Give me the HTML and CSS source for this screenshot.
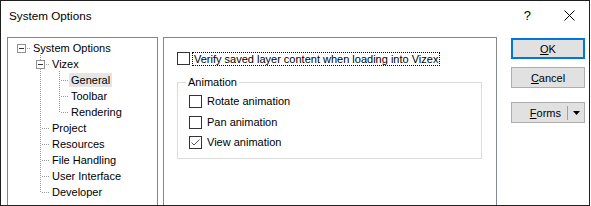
FILE: index.html
```html
<!DOCTYPE html>
<html>
<head>
<meta charset="utf-8">
<link rel="stylesheet" href="styles.css">
</head>
<body>
<div class="window">
  <div class="titlebar">
    <span class="title">System Options</span>
    <span class="help">?</span>
    <svg class="close" width="11" height="11" viewBox="0 0 11 11"><path d="M0.5 0.5L10.5 10.5M10.5 0.5L0.5 10.5" stroke="#000" stroke-width="1" fill="none"/></svg>
  </div>
  <div class="body">
    <div class="tree">
      <div class="row"><span class="cell"><span class="exp"></span><span class="hr-box"></span></span><span class="label">System Options</span></div>
      <div class="row"><span class="cell"></span><span class="cell pipe"><span class="exp"></span><span class="hr-box"></span></span><span class="label">Vizex</span></div>
      <div class="row"><span class="cell"></span><span class="cell pipe"></span><span class="cell tee"></span><span class="label selected">General</span></div>
      <div class="row"><span class="cell"></span><span class="cell pipe"></span><span class="cell tee"></span><span class="label">Toolbar</span></div>
      <div class="row"><span class="cell"></span><span class="cell pipe"></span><span class="cell elbow"></span><span class="label">Rendering</span></div>
      <div class="row"><span class="cell"></span><span class="cell tee"></span><span class="label">Project</span></div>
      <div class="row"><span class="cell"></span><span class="cell tee"></span><span class="label">Resources</span></div>
      <div class="row"><span class="cell"></span><span class="cell tee"></span><span class="label">File Handling</span></div>
      <div class="row"><span class="cell"></span><span class="cell tee"></span><span class="label">User Interface</span></div>
      <div class="row"><span class="cell"></span><span class="cell elbow"></span><span class="label">Developer</span></div>
    </div>
    <div class="panel">
      <div class="vrow"><span class="cb"></span><span class="focus">Verify saved layer content when loading into Vizex</span></div>
      <fieldset class="group">
        <legend>Animation</legend>
        <div class="crow first"><span class="cb"></span><span class="ctext">Rotate animation</span></div>
        <div class="crow"><span class="cb"></span><span class="ctext">Pan animation</span></div>
        <div class="crow"><span class="cb"><svg width="11" height="11" viewBox="0 0 11 11"><path d="M1.5 5.5L4 8L9.5 2.5" stroke="#555" stroke-width="1" fill="none"/></svg></span><span class="ctext">View animation</span></div>
      </fieldset>
    </div>
    <div class="buttons">
      <div class="btn default"><span><u>O</u>K</span></div>
      <div class="btn cancel"><span><u>C</u>ancel</span></div>
      <div class="btn split"><span class="stext"><u>F</u>orms</span><span class="sep"></span><svg class="arrow" width="7" height="4" viewBox="0 0 7 4"><path d="M0 0H7L3.5 4Z" fill="#000"/></svg></div>
    </div>
  </div>
</div>
</body>
</html>
```
FILE: styles.css
```css
html, body {
  margin: 0;
  padding: 0;
}
body {
  width: 591px;
  height: 206px;
  overflow: hidden;
  background: #ffffff;
  font-family: "Liberation Sans", Arial, sans-serif;
  font-size: 11px;
  color: #000;
}
.window {
  box-sizing: border-box;
  width: 590px;
  height: 206px;
  border: 1px solid #1f1f1f;
  background: #fff;
  display: flex;
  flex-direction: column;
}
.titlebar {
  flex: none;
  height: 29px;
  background: #fff;
  display: flex;
  align-items: center;
  padding: 0 14px 0 8px;
}
.title {
  flex: 1;
  font-size: 11.7px;
}
.help {
  font-size: 13px;
  margin-right: 33px;
}
.close {
  display: block;
}
.body {
  flex: 1;
  min-height: 0;
  display: flex;
  padding: 7px 0 0 6px;
}
.tree {
  flex: none;
  box-sizing: border-box;
  width: 151px;
  border: 1px solid #828790;
  border-bottom: none;
  background: #fff;
  padding: 1px 0 0 4px;
}
.row {
  display: flex;
  height: 16px;
}
.cell {
  flex: none;
  position: relative;
  width: 19px;
  height: 16px;
}
.cell.pipe::before,
.cell.tee::before,
.cell.elbow::before {
  content: "";
  position: absolute;
  left: 9px;
  top: 0;
  width: 1px;
  height: 16px;
  background: repeating-linear-gradient(to bottom, #9a9a9a 0 1px, transparent 1px 2px);
}
.cell.elbow::before {
  height: 10px;
}
.cell.tee::after,
.cell.elbow::after {
  content: "";
  position: absolute;
  left: 10px;
  top: 9px;
  width: 9px;
  height: 1px;
  background: repeating-linear-gradient(to right, transparent 0 1px, #9a9a9a 1px 2px);
}
.hr-box {
  position: absolute;
  left: 14px;
  top: 9px;
  width: 5px;
  height: 1px;
  background: repeating-linear-gradient(to right, transparent 0 1px, #9a9a9a 1px 2px);
}
.exp {
  position: absolute;
  left: 5px;
  top: 5px;
  z-index: 1;
  box-sizing: border-box;
  width: 9px;
  height: 9px;
  border: 1px solid #919191;
  background: #fff;
}
.exp::after {
  content: "";
  position: absolute;
  left: 1px;
  top: 3px;
  width: 5px;
  height: 1px;
  background: #333;
}
.label {
  align-self: flex-end;
  height: 14px;
  line-height: 14px;
  padding: 0 2px;
  white-space: nowrap;
}
.label.selected {
  background: #e5e5e5;
}
.panel {
  flex: none;
  box-sizing: border-box;
  width: 334px;
  margin-left: 5px;
  border: 1px solid #828790;
  border-bottom: none;
  padding: 14px 0 0 13px;
}
.cb {
  flex: none;
  box-sizing: border-box;
  width: 13px;
  height: 13px;
  border: 1px solid #333;
  background: #fff;
}
.cb svg {
  display: block;
}
.vrow {
  display: flex;
  height: 14px;
}
.focus {
  margin-left: 2px;
  box-sizing: border-box;
  height: 14px;
  line-height: 12px;
  padding: 0 1px;
  border: 1px dotted #000;
  white-space: nowrap;
}
.group {
  box-sizing: border-box;
  width: 305px;
  margin: 8px 0 0 0;
  padding: 1px 0 6px 11px;
  border: 1px solid #dcdcdc;
  min-width: 0;
}
.group legend {
  margin-left: -3px;
  padding: 0 2px;
  height: 16px;
  line-height: 16px;
}
.crow {
  display: flex;
  align-items: center;
  height: 20px;
}
.crow.first {
  margin-bottom: 1px;
}
.ctext {
  margin-left: 5px;
  white-space: nowrap;
}
.buttons {
  flex: none;
  width: 74px;
  margin-left: 14px;
  padding-top: 1px;
  display: flex;
  flex-direction: column;
}
.btn {
  box-sizing: border-box;
  height: 21px;
  border: 1px solid #adadad;
  background: #e1e1e1;
  display: flex;
  align-items: center;
  justify-content: center;
}
.btn.default {
  border: 2px solid #0078d7;
}
.btn.cancel {
  margin-top: 8px;
}
.btn.split {
  margin-top: 14px;
  justify-content: flex-end;
  padding-right: 4px;
}
.sep {
  width: 1px;
  height: 14px;
  background: #a0a0a0;
  margin: 0 5px 0 6px;
}
.arrow {
  display: block;
}
```
